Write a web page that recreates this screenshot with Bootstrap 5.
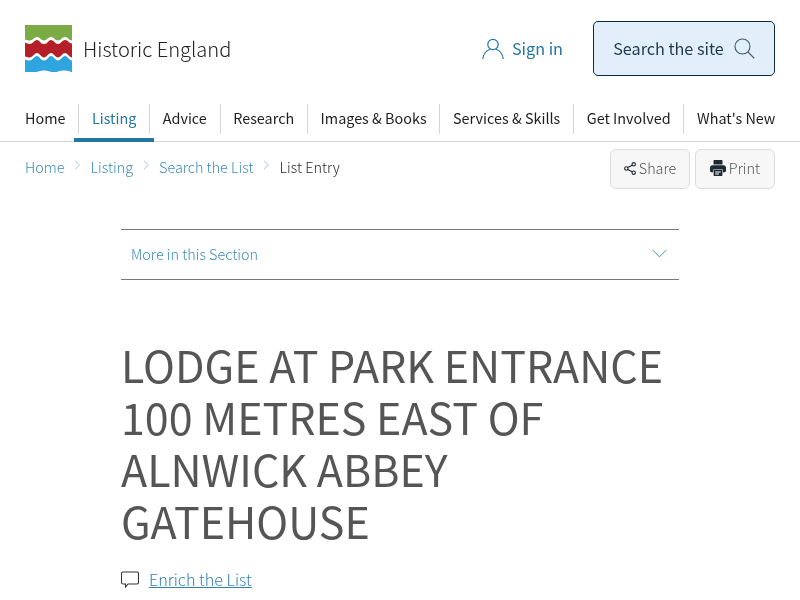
<!DOCTYPE html>
<html lang="en">
<head>
<meta charset="utf-8">
<title>Lodge at Park Entrance</title>
<link href="https://cdn.jsdelivr.net/npm/bootstrap@5.3.0/dist/css/bootstrap.min.css" rel="stylesheet">
<style>
html,body{height:600px;overflow:hidden}
body{font-family:"Noto Sans CJK SC","Noto Sans",sans-serif;font-size:14.4px;color:#1e1e1e;background:#fff}
a{color:#2e82b0}
.site-head,.nav-wrap,.crumb-bar,.sheet{will-change:transform}
.site-head{height:98px;padding:21px 25px 0;align-items:flex-start}
.logo-mark{width:47px;height:47px;margin-top:4px;display:block;flex:none}
.logo-name{font-weight:300;font-size:20.1px;color:#222;margin:13px 0 0 11px;line-height:30px}
.signin{color:#2276a4;font-size:16.2px;text-decoration:none;gap:8px;margin-right:30px;height:55px}
.search-btn{--bs-btn-bg:#e2eefa;--bs-btn-border-color:#0d2a3c;--bs-btn-color:#1e3a4c;--bs-btn-hover-bg:#e2eefa;--bs-btn-hover-border-color:#0d2a3c;--bs-btn-border-radius:5px;width:182px;height:55px;font-size:16.2px;gap:10px;padding:0}
.main-nav{height:44px;padding:0 25px;border-bottom:1px solid #d5d5d5;justify-content:space-between;flex-wrap:nowrap}
.main-nav .nav-item{position:relative;flex:0 0 auto;height:43px}
.main-nav .nav-link{color:#1e1e1e;font-size:14.4px;line-height:28px;height:30px;padding:0 12.7px;margin-top:6px;border-right:1px solid #d5d5d5;white-space:nowrap}
.main-nav .nav-item:first-child .nav-link{padding-left:0}
.main-nav .nav-item:last-child .nav-link{padding-right:0;border-right:0}
.main-nav .on .nav-link{color:#2276a4}
.main-nav .on::after{content:"";position:absolute;left:-5px;right:-4px;bottom:-1px;height:4px;background:#2276a4}
.crumb-bar{padding:7px 25px 0;height:87px;align-items:flex-start}
.crumb-bar .breadcrumb{margin:0;padding-top:8px;font-weight:300;font-size:14.4px;line-height:20px;--bs-breadcrumb-item-padding-x:0}
.crumb-bar .breadcrumb a{color:#3d8cb8;text-decoration:none}
.crumb-bar .breadcrumb-item{color:#2a2a2a;display:flex;align-items:center}
.crumb-bar .breadcrumb-item+.breadcrumb-item::before{display:none}
.crumb-sep{width:26px;display:flex;justify-content:center;margin-top:-5px}
.tool-btn{--bs-btn-bg:#f8f7f7;--bs-btn-border-color:#dcdcdc;--bs-btn-color:#555;--bs-btn-hover-bg:#f8f7f7;--bs-btn-hover-border-color:#dcdcdc;--bs-btn-hover-color:#555;--bs-btn-border-radius:6px;height:40px;width:80px;padding:0 0 2px;gap:3px;font-weight:300;font-size:14.4px;justify-content:center}
.tool-set{gap:5px}
.sheet{width:558px}
.more-row{height:51px;border-top:1px solid #777;border-bottom:1px solid #777;padding:0 12px 2px 10px;color:#3d8cb8;font-weight:300;font-size:14.4px;text-decoration:none}
.entry-title{font-size:43px;line-height:52px;font-weight:400;color:#555;margin:58px 0 0;text-transform:uppercase}
.enrich{margin-top:21px;gap:10px;line-height:24px}
.enrich a{font-size:16.2px;font-weight:300}
</style>
</head>
<body>
<header class="site-head d-flex">
  <a href="#" class="d-flex text-decoration-none">
    <svg class="logo-mark" viewBox="0 0 47 47" aria-hidden="true">
      <path d="M0 0H47V15.500C44 15.500 43 12 40 12S36 15.500 33 15.500 29 12 26 12 22 15.500 19 15.500 15 12 12 12 8 15.500 4.500 15.500 1.500 14.500 0 14.500Z" fill="#7aab44"/>
      <path d="M0 17.500C1.500 18 3 19 4.500 19 8 19 9 15 12 15S15 19 19 19 23 15 26 15 30 19 33 19 37 15 40 15 44 18.500 47 18.500V32.500C44 32.500 43 28 40 28S36 32.500 33 32.500 29 28 26 28 22 32.500 19 32.500 15 28 12 28 8 32.500 4.500 32.500 1.500 31.500 0 31.500Z" fill="#b51f27"/>
      <path d="M0 34.500C1.500 35 3 35.500 4.500 35.500 8 35.500 9 31 12 31S15 35.500 19 35.500 23 31 26 31 30 35.500 33 35.500 37 31 40 31 44 35.500 47 35.500V47H46C44 46 42 45.500 39 45.500S34 46 32 47H26C24 46 21 45.500 19 45.500S14 46 12 47H0Z" fill="#2fa5df"/>
    </svg>
    <span class="logo-name">Historic England</span>
  </a>
  <div class="ms-auto d-flex">
    <a href="#" class="signin d-flex align-items-center">
      <svg width="22" height="22" viewBox="0 0 22 22" fill="none" stroke="#2276a4" stroke-width="1.2" aria-hidden="true"><circle cx="11" cy="6.500" r="5.200"/><path d="M.7 21C1.500 15.500 5 12.300 8 11.300M21.300 21C20.500 15.500 17 12.300 14 11.300"/></svg>
      <span>Sign in</span>
    </a>
    <button type="button" class="btn search-btn d-flex align-items-center justify-content-center">
      <span>Search the site</span>
      <svg width="21" height="21" viewBox="0 0 21 21" fill="none" stroke="#44596a" stroke-width="1.1" aria-hidden="true"><circle cx="8.500" cy="8.500" r="7.500"/><path d="M14 14l6.300 6.300"/></svg>
    </button>
  </div>
</header>
<nav class="nav-wrap">
  <ul class="nav main-nav">
    <li class="nav-item"><a class="nav-link" href="#">Home</a></li>
    <li class="nav-item on"><a class="nav-link" href="#">Listing</a></li>
    <li class="nav-item"><a class="nav-link" href="#">Advice</a></li>
    <li class="nav-item"><a class="nav-link" href="#">Research</a></li>
    <li class="nav-item"><a class="nav-link" href="#">Images &amp; Books</a></li>
    <li class="nav-item"><a class="nav-link" href="#">Services &amp; Skills</a></li>
    <li class="nav-item"><a class="nav-link" href="#">Get Involved</a></li>
    <li class="nav-item"><a class="nav-link" href="#">What's New</a></li>
  </ul>
</nav>
<div class="crumb-bar d-flex justify-content-between">
  <ol class="breadcrumb">
    <li class="breadcrumb-item"><a href="#">Home</a></li>
    <li class="breadcrumb-item"><span class="crumb-sep"><svg width="7" height="10" viewBox="0 0 7 10" fill="none" stroke="#a9c4d4" aria-hidden="true"><path d="M1 .8L5.500 5 1 9.200"/></svg></span><a href="#">Listing</a></li>
    <li class="breadcrumb-item"><span class="crumb-sep"><svg width="7" height="10" viewBox="0 0 7 10" fill="none" stroke="#a9c4d4" aria-hidden="true"><path d="M1 .8L5.500 5 1 9.200"/></svg></span><a href="#">Search the List</a></li>
    <li class="breadcrumb-item active"><span class="crumb-sep"><svg width="7" height="10" viewBox="0 0 7 10" fill="none" stroke="#a9c4d4" aria-hidden="true"><path d="M1 .8L5.500 5 1 9.200"/></svg></span>List Entry</li>
  </ol>
  <div class="d-flex tool-set">
    <button type="button" class="btn tool-btn d-flex align-items-center">
      <svg width="12" height="13" viewBox="0 0 12 13" fill="none" stroke="#1e2a32" stroke-width="1.1" aria-hidden="true"><circle cx="2.300" cy="6.500" r="1.700"/><circle cx="9.700" cy="2.300" r="1.700"/><circle cx="9.700" cy="10.700" r="1.700"/><path d="M3.800 5.600L8.200 3.200M3.800 7.400l4.400 2.400"/></svg>
      <span>Share</span>
    </button>
    <button type="button" class="btn tool-btn d-flex align-items-center">
      <svg width="16" height="16" viewBox="0 0 16 16" aria-hidden="true"><path fill="#1e2a32" d="M4.500 0h7c.6 0 1 .4 1 1v3.500h-9V1c0-.6.4-1 1-1zM2.500 5.200h11c1.400 0 2.500 1.100 2.500 2.500v3.100c0 .9-.7 1.500-1.500 1.500h-1.600V9.500H3.100v2.800H1.500C.7 12.300 0 11.700 0 10.800V7.700c0-1.400 1.100-2.500 2.500-2.500z"/><path fill="#1e2a32" d="M3.600 10h8.800v5c0 .6-.4 1-1 1H4.600c-.6 0-1-.4-1-1z"/><path fill="#fff" d="M5.200 11.600h5.600v1H5.200zM5.200 13.600h3.800v1H5.200z"/></svg>
      <span>Print</span>
    </button>
  </div>
</div>
<main class="sheet mx-auto">
  <a href="#" class="more-row d-flex align-items-center justify-content-between">
    <span>More in this Section</span>
    <svg width="15" height="9" viewBox="0 0 15 9" fill="none" stroke="#2e82b0" stroke-width=".9" aria-hidden="true"><path d="M.5.8l7 7 7-7"/></svg>
  </a>
  <h1 class="entry-title">Lodge at Park Entrance 100 Metres East of Alnwick Abbey Gatehouse</h1>
  <div class="enrich d-flex align-items-center">
    <svg width="18" height="17" viewBox="0 0 18 17" fill="none" stroke="#333" stroke-width="1.1" aria-hidden="true"><path d="M2 1h14a1.500 1.500 0 0 1 1.500 1.500v9A1.500 1.500 0 0 1 16 13H7l-2.500 3v-3H2A1.500 1.500 0 0 1 .5 11.500v-9A1.500 1.500 0 0 1 2 1z"/></svg>
    <a href="#">Enrich the List</a>
  </div>
</main>
<script src="https://cdn.jsdelivr.net/npm/bootstrap@5.3.0/dist/js/bootstrap.bundle.min.js"></script>
</body>
</html>
